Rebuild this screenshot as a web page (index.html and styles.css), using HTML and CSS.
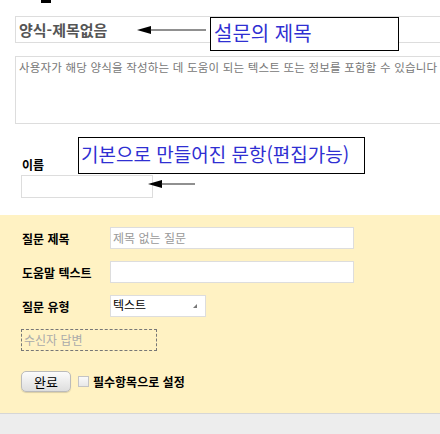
FILE: index.html
```html
<!DOCTYPE html>
<html lang="ko">
<head>
  <meta charset="UTF-8" />
  <meta name="viewport" content="width=device-width, initial-scale=1.0" />
  <title>양식 편집</title>
  <link rel="stylesheet" href="styles.css">
</head>
<body>
  <div class="page">
    <span class="cursor-mark"></span>

    <div class="form-head">
      <div class="form-title">양식-제목없음</div>
      <div class="form-desc">사용자가 해당 양식을 작성하는 데 도움이 되는 텍스트 또는 정보를 포함할 수 있습니다</div>
    </div>

    <div class="default-item">
      <div class="item-label">이름</div>
      <div class="text-box name-box"></div>
    </div>

    <div class="edit-panel">
      <div class="qrow">
        <label class="qlabel">질문 제목</label>
        <div class="text-box wide placeholder">제목 없는 질문</div>
      </div>
      <div class="qrow">
        <label class="qlabel">도움말 텍스트</label>
        <div class="text-box wide"></div>
      </div>
      <div class="qrow">
        <label class="qlabel">질문 유형</label>
        <div class="select-box">텍스트<span class="select-arrow"></span></div>
      </div>
      <div class="answer-box">수신자 답변</div>
      <div class="done-row">
        <button class="done-button">완료</button>
        <input type="checkbox" class="req-check">
        <span class="req-label">필수항목으로 설정</span>
      </div>
    </div>
    <div class="footer-bar"></div>

    <!-- annotations drawn over the screenshot -->
    <svg class="arrow arrow-title" width="70" height="10" viewBox="0 0 70 10">
      <polygon points="0,5 14,1 14,9" fill="#000"/>
      <line x1="13" y1="5" x2="69" y2="5" stroke="#222" stroke-width="1.2"/>
    </svg>
    <div class="note note-title">설문의 제목</div>

    <svg class="arrow arrow-item" width="48" height="10" viewBox="0 0 48 10">
      <polygon points="0,5 14,1 14,9" fill="#000"/>
      <line x1="13" y1="5" x2="47" y2="5" stroke="#222" stroke-width="1.2"/>
    </svg>
    <div class="note note-item">기본으로 만들어진 문항(편집가능)</div>
  </div>
</body>
</html>
```

FILE: styles.css
```css
html, body {
  margin: 0;
  overflow: hidden;
}
body {
  font-family: "Noto Sans CJK KR", "Noto Sans", sans-serif;
  background: #fff;
  color: #000;
}
.page {
  position: relative;
  height: 434px;
  display: flex;
  flex-direction: column;
}
.cursor-mark {
  position: absolute;
  left: 41px;
  top: 0;
  width: 10px;
  height: 3px;
  background: #000;
}

.form-head {
  padding: 16px 0 0 15px;
  margin-right: -20px;
}
.form-title {
  height: 25px;
  border: 1px solid #ddd;
  padding-left: 3px;
  font-size: 15px;
  font-weight: bold;
  line-height: 25px;
  color: #555;
}
.form-desc {
  height: 62px;
  margin-top: 13px;
  border: 1px solid #ddd;
  padding: 2px 3px;
  font-size: 11.5px;
  letter-spacing: 0.2px;
  line-height: 16px;
  color: #777;
  white-space: nowrap;
}

.default-item {
  padding: 32px 0 0 21px;
  height: 59px;
}
.item-label {
  font-size: 12px;
  font-weight: bold;
  line-height: 18px;
  padding-left: 1px;
}
.text-box {
  border: 1px solid #ddd;
  background: #fff;
  box-sizing: border-box;
  height: 22px;
  font-size: 12px;
  line-height: 20px;
  padding-left: 2px;
}
.name-box {
  width: 132px;
  margin-top: 1px;
  height: 23px;
}
.placeholder {
  color: #999;
}

.edit-panel {
  background: #fff2c3;
  padding: 12px 0 0 21px;
  height: 186px;
  border-bottom: 1px solid #d6d6d6;
}
.qrow {
  display: flex;
  align-items: center;
  margin-bottom: 12px;
}
.qlabel {
  width: 88px;
  font-size: 12px;
  font-weight: bold;
  padding-left: 1px;
}
.wide {
  width: 244px;
}
.select-box {
  position: relative;
  width: 96px;
  height: 22px;
  box-sizing: border-box;
  border: 1px solid #ddd;
  background: #fff;
  font-size: 12px;
  line-height: 18px;
  padding-left: 2px;
}
.select-arrow {
  position: absolute;
  right: 8px;
  top: 8px;
  border-style: solid;
  border-width: 0 0 4px 4px;
  border-color: transparent transparent #777 transparent;
}
.answer-box {
  width: 136px;
  height: 22px;
  box-sizing: border-box;
  margin-top: 3px;
  border: 1px dashed #777;
  font-size: 12px;
  line-height: 19px;
  padding-left: 2px;
  color: #aaa;
}
.done-row {
  display: flex;
  align-items: center;
  margin-top: 20px;
}
.done-button {
  width: 50px;
  height: 21px;
  padding: 0;
  border: 1px solid #bbb;
  border-radius: 5px;
  background: linear-gradient(#fbfbfb, #dedede);
  box-shadow: 0 1px 1px rgba(0, 0, 0, 0.15);
  font-family: inherit;
  font-size: 13px;
  line-height: 18px;
  color: #000;
}
.req-check {
  appearance: none;
  width: 11px;
  height: 11px;
  margin: 0 4px 0 7px;
  border: 1px solid #c4c4c4;
  background: linear-gradient(#fafafa, #e8e8e8);
}
.req-label {
  font-size: 12px;
  font-weight: bold;
}
.footer-bar {
  flex: 1;
  background: #ededed;
}

.arrow {
  position: absolute;
}
.arrow-title {
  left: 137px;
  top: 25px;
}
.arrow-item {
  left: 148px;
  top: 179px;
}
.note {
  position: absolute;
  box-sizing: border-box;
  border: 1px solid #000;
  background: #fff;
  color: #2f2fd2;
  white-space: nowrap;
}
.note-title {
  left: 210px;
  top: 17px;
  width: 189px;
  height: 34px;
  padding-left: 3px;
  font-size: 20px;
  line-height: 30px;
}
.note-item {
  left: 78px;
  top: 137px;
  width: 287px;
  height: 37px;
  padding-left: 2px;
  font-size: 19px;
  line-height: 32px;
}
```
